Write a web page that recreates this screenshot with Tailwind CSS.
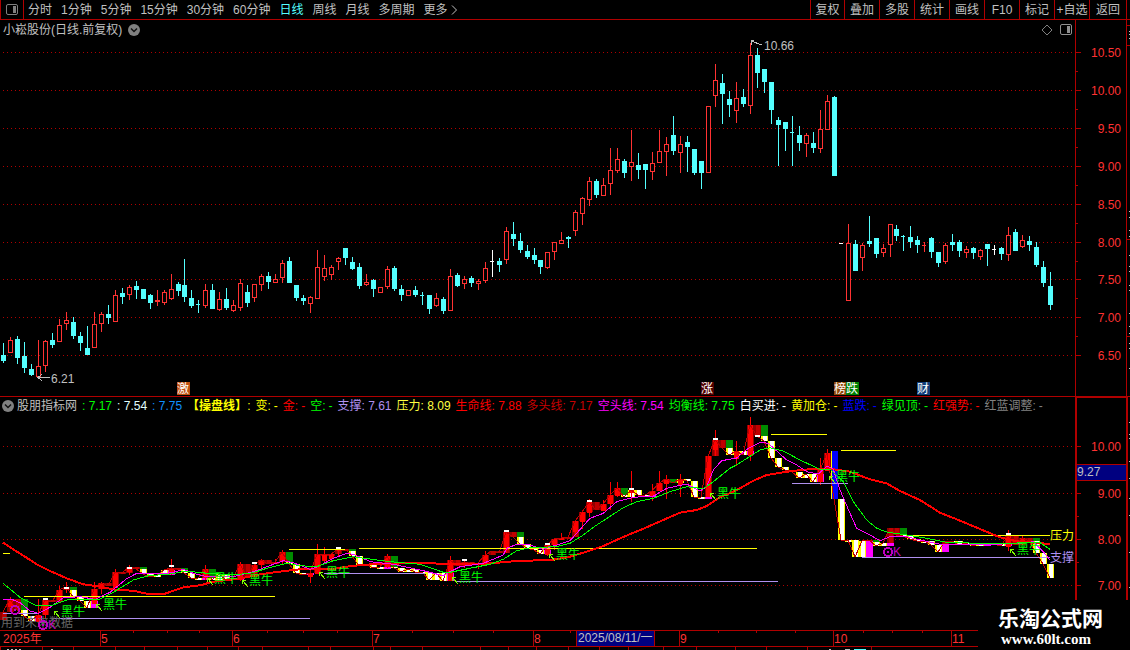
<!DOCTYPE html>
<html lang="zh-CN">
<head>
<meta charset="utf-8">
<title>小崧股份 日线</title>
<script src="https://cdn.jsdelivr.net/npm/@tailwindcss/browser@4"></script>
</head>
<body class="bg-black text-[#c0c0c0] text-[12px] leading-[18px] font-['Liberation_Sans','Noto_Sans_CJK_SC',sans-serif] overflow-hidden">
<div class="relative">
<header class="flex h-[20px] border-b border-[#b00000] pr-[3px] whitespace-nowrap">
  <button class="w-[24px] border-x border-[#b00000] flex items-center justify-center" aria-label="侧栏">
    <svg width="12" height="11" viewBox="0 0 12 11"><rect x=".5" y=".5" width="11" height="10" rx="1.5" fill="none" stroke="#808080"/><rect x="7" y="2" width="3" height="7" fill="#808080"/></svg>
  </button>
  <nav class="flex flex-1 gap-[9px] pl-[4px]">
    <button>分时</button><button>1分钟</button><button>5分钟</button><button>15分钟</button><button>30分钟</button><button>60分钟</button><button class="text-[#54ffff]">日线</button><button>周线</button><button>月线</button><button>多周期</button><button class="flex items-center">更多<svg class="ml-[3px]" width="7" height="10" viewBox="0 0 7 10"><path d="M1 .5 5.500 5 1 9.500" fill="none" stroke="#c0c0c0"/></svg></button>
  </nav>
  <div class="flex">
    <button class="w-[34px] border-l border-[#b00000]">复权</button><button class="w-[35px] border-l border-[#b00000]">叠加</button><button class="w-[35px] border-l border-[#b00000]">多股</button><button class="w-[35px] border-l border-[#b00000]">统计</button><button class="w-[35px] border-l border-[#b00000]">画线</button><button class="w-[35px] border-l border-[#b00000]">F10</button><button class="w-[35px] border-l border-[#b00000]">标记</button><button class="w-[35px] border-l border-[#b00000]">+自选</button><button class="w-[38px] border-l border-r border-[#b00000]">返回</button>
  </div>
</header>

<main>
<section class="flex border-b border-[#b00000]">
  <div class="relative flex-1">
    <svg id="kline" class="block w-full h-auto" viewBox="0 20 1075 376" shape-rendering="crispEdges"></svg>
    <div class="absolute inset-x-0 top-0 flex items-center pl-[3px] pr-[3px] h-[19px]">
      <h1>小崧股份(日线.前复权)</h1>
      <button class="ml-[6px]" aria-label="展开"><svg class="block" width="12" height="12" viewBox="0 0 12 12"><circle cx="6" cy="6" r="6" fill="#808080"/><path d="M3 4.500 6 7.500 9 4.500" fill="none" stroke="#101010" stroke-width="1.500"/></svg></button>
      <svg class="ml-auto" width="12" height="12" viewBox="0 0 12 12"><path d="M6 1 11 6 6 11 1 6Z" fill="none" stroke="#808080"/></svg>
      <svg class="ml-[7px]" width="12" height="11" viewBox="0 0 12 11"><rect x=".5" y=".5" width="11" height="10" rx="1.500" fill="none" stroke="#909090"/><rect x="7" y="2" width="3" height="7" fill="#909090"/></svg>
    </div>
  </div>
  <svg id="axis1" class="block w-[55px] h-[376px] shrink-0" viewBox="1075 20 55 376" shape-rendering="crispEdges"></svg>
</section>

<section class="flex">
  <div class="flex-1">
    <div class="flex items-center h-[17px] gap-[5px] whitespace-nowrap pl-[2px] text-[#c0c0c0]">
      <button class="-mr-[2px]" aria-label="指标"><svg class="block" width="12" height="12" viewBox="0 0 12 12"><circle cx="6" cy="6" r="6" fill="#808080"/><path d="M3 4.500 6 7.500 9 4.500" fill="none" stroke="#101010" stroke-width="1.500"/></svg></button>
      <span>股朋指标网</span>
      <span class="text-[#00ff00]">: 7.17</span><span class="text-[#e0ffff]">: 7.54</span><span class="text-[#1090ff]">: 7.75</span>
      <span class="text-[#ffff00]"><b>【操盘线】</b>:</span>
      <span class="text-[#ffff00] flex gap-[3px]"><span>变:</span><span>-</span></span>
      <span class="text-[#ff0000] flex gap-[3px]"><span>金:</span><span>-</span></span>
      <span class="text-[#00ff00] flex gap-[3px]"><span>空:</span><span>-</span></span>
      <span class="text-[#b090f0]">支撑: 7.61</span><span class="text-[#ffff40]">压力: 8.09</span><span class="text-[#ff0000]">生命线: 7.88</span><span class="text-[#c80000]">多头线: 7.17</span><span class="text-[#ff00ff]">空头线: 7.54</span><span class="text-[#00ff00]">均衡线: 7.75</span>
      <span class="text-white flex gap-[3px]"><span>白买进:</span><span>-</span></span>
      <span class="text-[#ffff00] flex gap-[3px]"><span>黄加仓:</span><span>-</span></span>
      <span class="text-[#0000ff] flex gap-[3px]"><span>蓝跌:</span><span>-</span></span>
      <span class="text-[#00ff00] flex gap-[3px]"><span>绿见顶:</span><span>-</span></span>
      <span class="text-[#ff0000] flex gap-[3px]"><span>红强势:</span><span>-</span></span>
      <span class="text-[#808080] flex gap-[3px]"><span>红蓝调整:</span><span>-</span></span>
    </div>
    <svg id="ind" class="block w-full h-auto overflow-visible" viewBox="0 414 1075 216" shape-rendering="crispEdges"></svg>
  </div>
  <svg id="axis2" class="block w-[55px] h-[233px] shrink-0" viewBox="1075 397 55 233" shape-rendering="crispEdges"></svg>
</section>
</main>

<footer>
  <svg id="time" class="block w-full h-auto" viewBox="0 630 1130 20" shape-rendering="crispEdges"></svg>
</footer>
<div class="absolute right-0 bottom-0 w-[152px] h-[50px] bg-black text-white font-bold flex flex-col items-start pl-[20px] pt-[6px]">
  <span class="text-[21px] leading-[26px]">乐淘公式网</span>
  <a href="#" class="pl-[3px] text-[15px] leading-[15px] font-['Liberation_Serif',serif]">www.60lt.com</a>
</div>
</div>

<script>
// x, colour, high, low, body top, body bottom
const K = `3 c 343 363 355 361;10 r 337 353 340 353;17 c 336 364 339 358;24 c 342 373 356 368;31 c 364 376 369 375;38 r 340 377 366 377;45 r 340 372 341 366;52 c 333 348 340 345;59 r 319 342 325 342;66 r 312 330 320 324;73 c 317 339 322 336;80 c 332 351 336 343;87 c 326 355 348 355;94 r 312 348 324 348;101 r 312 332 314 324;108 c 305 324 314 318;115 r 290 322 295 322;122 c 288 304 293 297;129 r 285 300 287 295;136 c 281 299 286 290;143 c 289 299 289 299;150 c 294 309 295 303;157 r 290 306 300 302;164 r 290 305 292 303;171 r 274 300 289 299;178 c 282 296 284 291;184 c 259 302 285 297;191 c 290 308 298 306;198 c 300 313 304 305;205 r 284 308 290 306;212 c 284 309 290 309;219 r 292 311 299 310;226 c 288 310 299 308;233 r 300 312 305 311;240 r 279 311 283 308;247 c 285 307 292 303;254 r 284 302 284 298;261 r 274 291 276 285;268 c 272 289 276 282;275 r 274 283 279 283;282 r 260 283 263 278;289 c 257 283 261 283;296 c 285 301 285 298;303 c 295 305 298 301;310 r 296 313 297 304;317 r 250 299 267 299;324 r 255 281 268 277;331 r 265 280 267 275;338 r 257 270 258 262;345 c 248 265 248 258;352 c 257 270 262 269;359 c 263 289 267 286;366 r 274 286 282 285;373 c 279 297 280 289;380 r 287 293 287 293;387 r 266 289 269 287;394 c 266 291 268 289;401 c 285 301 289 295;408 r 290 296 290 296;415 c 286 297 290 295;422 c 292 305 295 296;429 c 295 314 295 309;436 r 293 307 298 306;443 c 297 314 299 311;450 r 269 311 276 311;457 c 273 287 275 286;464 r 276 289 279 284;471 c 276 287 278 283;478 r 279 290 281 284;485 r 262 283 268 281;492 w 250 277 261 262;499 c 258 272 261 265;506 r 227 264 231 260;513 c 222 246 234 239;520 c 233 253 241 250;527 c 245 259 251 257;534 c 248 264 255 260;540 c 260 274 260 267;547 r 252 269 252 268;554 r 242 260 242 252;561 r 232 244 240 244;568 c 236 248 237 239;575 r 210 236 212 231;582 r 197 225 198 214;589 r 177 206 181 200;596 c 179 198 181 195;603 r 178 196 185 196;610 r 148 195 170 184;617 r 148 173 159 171;624 c 159 178 161 173;631 r 130 181 162 167;638 c 153 179 165 170;645 c 164 189 164 170;652 r 152 180 163 172;659 r 130 163 151 163;666 r 137 176 144 152;673 c 116 155 135 151;680 r 136 173 144 153;687 c 136 172 142 147;694 c 149 175 149 173;701 c 161 189 161 173;708 r 106 173 106 173;715 r 64 107 80 96;722 c 74 124 83 94;729 c 91 117 99 105;736 r 82 123 98 111;743 c 89 107 97 104;750 r 43 114 55 106;757 c 48 88 55 73;764 c 69 93 69 82;771 c 82 124 82 110;778 c 117 166 120 125;785 c 122 151 122 129;792 c 116 166 132 133;799 c 126 151 135 143;806 r 133 157 135 144;813 c 132 153 143 148;820 r 110 153 129 149;827 r 95 130 101 130;834 c 96 176 97 176;841 w 243 244 243 244;848 r 224 301 243 301;855 c 240 271 244 271;862 r 243 271 245 258;869 c 216 247 241 244;876 c 238 258 238 254;883 r 244 257 248 253;890 r 224 257 224 245;896 c 225 241 229 236;903 c 235 251 236 237;910 c 226 248 237 242;917 c 236 253 240 245;924 r 242 252 245 246;931 c 237 258 238 252;938 c 252 267 252 263;945 r 243 264 245 262;952 c 234 251 242 245;959 c 240 257 242 251;966 r 246 258 249 253;973 c 247 259 248 253;980 r 249 260 250 257;987 c 244 266 244 249;994 w 245 255 249 250;1001 c 247 260 248 254;1008 r 227 261 235 255;1015 c 229 251 232 251;1022 r 235 248 240 247;1029 c 236 251 241 245;1036 c 242 267 247 265;1043 c 261 287 267 283;1050 c 272 310 286 305`
  .split(';').map(s => { const p = s.split(' '); return {x:+p[0], c:p[1], h:+p[2], l:+p[3], t:+p[4], b:+p[5]}; });
const rect = (x,y,w,h,f) => `<rect x="${x}" y="${y}" width="${w}" height="${h}" fill="${f}"/>`;
const text = (x,y,s,f,a='') => `<text x="${x}" y="${y}" fill="${f}" font-size="12" ${a}>${s}</text>`;
const RED='#b00000', UP='#ff3232';
const dots = y => `<path d="M3 ${y}.5H1074" stroke="${RED}" stroke-dasharray="1 3"/>`;

// price panel
let o = [52,90,128,166,204,242,279,317,355].map(dots).join('');
for (const k of K) {
  const col = k.c==='r'?UP:k.c==='c'?'#54ffff':'#ffffff';
  const n = k.b-k.t;
  if (k.c==='r' && n>2) {
    if (k.h<k.t) o += rect(k.x,k.h,1,k.t-k.h,col);
    if (k.l>k.b) o += rect(k.x,k.b,1,k.l-k.b,col);
    o += `<rect x="${k.x-1.5}" y="${k.t+.5}" width="4" height="${n-1}" fill="#000" stroke="${col}"/>`;
  } else {
    o += rect(k.x,k.h,1,k.l-k.h,col)+rect(k.x-2,k.t,n<2?4:5,n,col);
  }
}
o += text(764,50,'10.66','#c0c0c0')+text(51,383,'6.21','#c0c0c0');
o += `<path d="M751 45V40H754M751 41 762 45" fill="none" stroke="#c0c0c0"/><path d="M38 377.5H50M42 374 38 377.5 42 381" fill="none" stroke="#c0c0c0"/>`;
for (const [x,s,f] of [[177,'激','#c05010'],[701,'涨','#500000'],[834,'榜','#904808'],[846,'跌','#008000'],[917,'财','#103c78']])
  o += rect(x,382,13,13,f)+text(x,393,s,'#ffffff');
document.getElementById('kline').innerHTML = o;

// price scale
o = rect(1075,20,1,376,RED)+rect(1126,20,1,376,RED)+rect(1126,25,4,1,RED)+rect(1126,45,4,1,RED)+rect(1126,239,4,1,RED)+rect(1126,336,4,1,RED);
[52,90,128,166,204,242,279,317,355].forEach((y,i) => {
  o += rect(1076,y,5,1,RED)+text(1121,y+5,(10.5-i*.5).toFixed(2),UP,'text-anchor="end"');
  if (i<8) o += rect(1076,y+19,2,1,RED);
});
for (const y of [31,34,38,211,217,230,236,255,266,271,285,290,313,326,333,343,348,368]) o += rect(1129,y,1,1,'#c0c0c0');
document.getElementById('axis1').innerHTML = o;

// indicator panel: bars run from close to close
const Y = v => Math.round(446+(v-90)*.6128);
const close = k => k.c==='r'?k.t:k.b;
const strong = [[3,17],[38,66],[94,136],[171,178],[205,205],[240,282],[310,345],[387,387],[450,513],[547,617],[652,666],[708,722],[750,757],[820,827],[869,869],[890,896],[945,945],[987,987],[1008,1029]];
const isR = x => strong.some(([a,b]) => x>=a && x<=b);
o = [446,493,539,585].map(dots).join('');
const bar = (x,a,b,e,c) => { const t=Math.min(a,b), h=Math.max(2,Math.abs(a-b)); return rect(x-3,t,7,h,e)+rect(x-1,t,4,h,c); };
K.forEach((k,i) => {
  const c = Y(close(k)), p = i?Y(close(K[i-1])):c+8, q = i>1?Y(close(K[i-2])):p;
  if (k.x===834) { o += rect(831,451,2,48,'#ffff00')+rect(832,451,6,48,'#0000ff'); return; }
  if (isR(k.x)) {
    o += bar(k.x,p,c,'#900000','#c00000');
    if (i>1 && !isR(K[i-1].x)) o += bar(k.x,q,p,'#ff00ff','#ff00ff');
  } else {
    o += bar(k.x,p,c,'#ffff00','#ffffff');
    if (isR(K[i-1].x) && ![952,994].includes(k.x)) o += bar(k.x,q,p,'#008c00','#008c00');
  }
  if (k.c==='r' && (isR(k.x) || [631,680,736].includes(k.x)) && ![890,945].includes(k.x))
    o += rect(k.x,Y(k.h),1,Y(k.l)-Y(k.h),'#ff0000')+rect(k.x-2,Y(k.t),5,Math.max(1,Y(k.b)-Y(k.t)),'#ff0000');
});
o += `<polyline points="${K.map(k => k.x+','+Y(close(k))).join(' ')}" fill="none" stroke="#c00000"/>`;
for (const [x,y] of [[45,598],[66,587],[129,567],[171,565],[254,562],[338,547],[464,559],[506,530],[547,543],[589,500],[631,488],[715,438],[757,435],[1008,533]]) o += rect(x-2,y,5,2,'#ffffff');

// curves in thirds of a pixel, one list per strip: origin x, origin y, points
const strips = [[0,530],[370,410],[740,410]];
const curve = (lists,col,w) => `<polyline fill="none" stroke="${col}" stroke-width="${w}" points="${lists.map((l,i) => l.trim().split(' ').map(p => { const [a,b]=p.split(','); return (strips[i][0]+a/3).toFixed(1)+','+(strips[i][1]+b/3).toFixed(1); }).join(' ')).join(' ')}"/>`;
const hl = (a,b,y,c) => rect(a,y,b-a,1,c);
for (const a of [[24,275,596],[289,345,549],[359,757,548],[3,10,553],[771,827,434],[841,896,450],[907,1050,535]]) o += hl(...a,'#ffff00');
for (const a of [[3,38,613],[52,310,618],[324,425,573],[457,778,581],[792,848,483],[862,1050,557]]) o += hl(...a,'#b090f0');
o += curve(['9,38 40,58 75,80 110,103 150,123 200,145 250,163 300,170 350,180 400,182 440,191 495,191 550,172 600,166 640,155 700,148 740,142 780,133 860,122 900,118 960,118 1000,117 1060,107 1100,105','0,463 60,462 115,459 180,459 230,463 330,463 430,454 550,449 600,440 640,428 700,408 760,381 820,356 880,330 930,308 980,300 1010,288 1050,262 1090,245','0,235 40,212 80,195 130,187 190,179 250,176 280,178 330,185 390,208 440,220 480,243 540,270 600,308 650,328 720,357 780,382 830,394 880,398 930,402'],'#ff0000',2);
o += curve(['9,207 35,208 60,218 90,243 115,250 150,232 190,203 240,200 285,208 330,187 380,146 410,130 470,132 520,128 550,118 580,130 620,140 700,140 760,125 850,92 880,98 930,118 950,112 1000,85 1040,70 1060,73 1100,90','0,455 70,463 160,482 220,497 240,485 270,470 340,460 400,435 410,415 440,403 480,405 520,418 560,405 600,392 660,325 700,310 740,275 790,262 850,258 890,235 950,222 990,243 1010,230 1030,180 1055,152 1100,144','0,135 25,115 60,97 85,100 140,150 170,165 200,185 235,192 262,168 280,178 300,240 330,310 350,355 390,375 420,392 450,380 500,380 540,390 600,403 700,403 790,402 840,400 880,395 910,425 930,450'],'#ff00ff',1);
o += curve(['9,160 60,202 105,225 150,228 200,210 300,207 340,187 400,150 450,136 500,134 560,123 600,128 700,135 760,128 800,115 860,100 900,107 950,110 1000,92 1060,80 1100,86','0,447 60,455 150,463 220,487 240,487 300,475 360,463 400,448 440,422 480,413 560,410 600,400 640,375 680,345 760,293 800,275 850,265 900,245 950,230 1000,236 1030,215 1080,175 1105,162','0,158 60,120 90,113 130,123 180,150 240,178 270,178 310,215 340,275 380,330 410,355 440,366 500,375 560,385 620,397 780,402 870,397 900,398 930,418'],'#00ff00',1);
for (const [x,y] of [[61,616],[103,609],[214,583],[249,585],[326,577],[459,582],[556,559],[717,498],[836,481],[1017,554]])
  o += `<path d="M${x-7} ${y-5}h4M${x-6.5} ${y-5}v4M${x-6} ${y-4}l5 6" stroke="#80ff00" fill="none"/>`+text(x,y,'黑牛','#00ff00');
const ok = (x,y,k) => `<circle cx="${x}" cy="${y}" r="4" fill="none" stroke="#c000c0" stroke-width="2"/><circle cx="${x}" cy="${y}" r="1" fill="#c000c0"/>`+(k?text(x+5,y+4,'K','#c000c0'):'');
o += text(1,627,'用到未来数据','#666666')+ok(15,610,0)+ok(43,625,1)+ok(888,552,1);
o += text(1050,540,'压力','#ffff00')+text(1050,562,'支撑','#b090f0');
document.getElementById('ind').innerHTML = o;

// indicator scale
o = rect(1075,397,2,203,RED)+rect(1126,397,2,203,RED)+rect(1075,397,53,1,RED);
[446,493,539,585].forEach((y,i) => { o += rect(1077,y,4,1,RED)+text(1121,y+5,(10-i).toFixed(2),UP,'text-anchor="end"'); if (i<3) o += rect(1077,y+23,2,1,RED); });
o += rect(1077,464,49,17,RED)+rect(1077,465,49,15,'#000080')+text(1077,476,'9.27','#c0c0c0');
for (const y of [422,434,438,461,478,498,515,552,587]) o += rect(1129,y,1,1,'#c0c0c0');
document.getElementById('axis2').innerHTML = o;

// time scale
o = rect(0,630,978,1,RED)+rect(0,646,978,1,RED);
for (const x of [100,232,372,533,679,833,951]) o += rect(x,630,1,16,RED);
for (const x of [133,167,199,267,303,337,412,453,493,570,718,756,795,863,892,922]) o += rect(x,631,1,2,RED);
for (const x of [0,42,73,115,144,177,207,238,262,308,330,373,390,422,480,508,536,568,599,628,663,696,735,766,807,871]) o += rect(x,647,1,3,RED);
for (const x of [7,11,15,19,51,829]) o += rect(x,649,2,1,'#c0c0c0');
o += rect(845,649,5,1,'#c0c0c0')+rect(854,649,12,1,'#54ffff');
o += rect(576,631,79,15,RED)+rect(577,631,77,15,'#000080')+text(578,642,'2025/08/11/一','#c0c0c0');
for (const [x,s] of [[3,'2025年'],[101,'5'],[233,'6'],[373,'7'],[534,'8'],[680,'9'],[834,'10'],[952,'11']]) o += text(x,643,s,UP);
document.getElementById('time').innerHTML = o;
</script>
</body>
</html>
